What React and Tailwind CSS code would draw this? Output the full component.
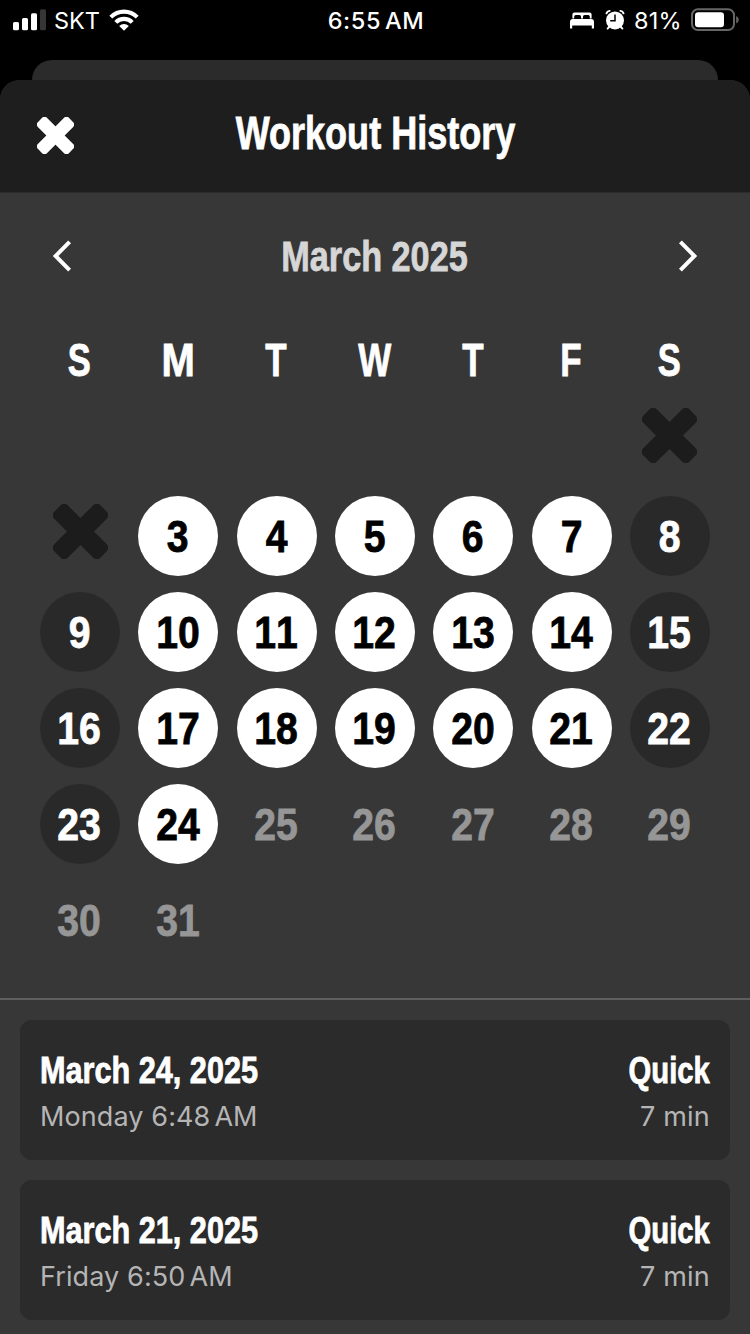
import React from "react";

const SANS = "font-['Inter','Liberation_Sans',sans-serif]";
const HEAD = "font-['Liberation_Sans',sans-serif] font-bold whitespace-nowrap [-webkit-text-stroke:0.8px_currentColor]";

function Cross({ className }) {
  return (
    <svg viewBox="-27.4 -27.4 54.8 54.8" className={className} fill="currentColor">
      <rect x="-32.5" y="-9.5" width="65" height="19" rx="5" transform="rotate(45)" />
      <rect x="-32.5" y="-9.5" width="65" height="19" rx="5" transform="rotate(-45)" />
    </svg>
  );
}

function Chevron({ className }) {
  return (
    <svg viewBox="0 0 20 32" className={className} fill="none" stroke="currentColor" strokeWidth="4">
      <path d="M17.6 1.8 L3.6 16 L17.6 30.2" />
    </svg>
  );
}

function StatusBar() {
  return (
    <div className={`${SANS} flex h-[60px] items-start text-white`}>
      <div className="flex h-10 flex-1 items-center pl-[13px]">
        <svg viewBox="0 0 33 22" className="h-[22px] w-[33px] shrink-0" fill="currentColor">
          <rect x="0" y="13" width="6" height="8.3" rx="1.5" />
          <rect x="9" y="9" width="6" height="12.3" rx="1.5" />
          <rect x="18" y="4.3" width="6" height="17" rx="1.5" />
          <rect x="27" y="0.3" width="6" height="21" rx="1.5" fill="#363636" />
        </svg>
        <span className="ml-[8px] w-[46px] pt-[2px] text-[23.5px] leading-[40px]">SKT</span>
        <svg viewBox="0 0 30 22" className="ml-[9px] h-[22px] w-[30px] shrink-0">
          <g fill="none" stroke="white" strokeWidth="4.1">
            <path d="M1.8 8.1 A18.6 18.6 0 0 1 28.2 8.1" />
            <path d="M6.8 13.4 A11.4 11.4 0 0 1 23.2 13.4" />
          </g>
          <path d="M15 21.8 L10.2 17 A7 7 0 0 1 19.8 17 Z" fill="white" />
        </svg>
      </div>
      <div className="h-10 w-[98px] whitespace-nowrap pt-px text-center text-[23.5px] font-medium leading-[40px] tracking-[0.6px]">
        6:55<span className="ml-[4px]">AM</span>
      </div>
      <div className="flex h-10 flex-1 items-center justify-end pr-[11px]">
        <svg viewBox="0 0 24 17" className="h-[17px] w-[24px] shrink-0" fill="currentColor">
          <path d="M2.4 6.4 V2.5 Q2.4 0.4 4.5 0.4 H19.5 Q21.6 0.4 21.6 2.5 V6.4 H19.8 V4.6 Q19.8 3 18.2 3 H14.6 Q13 3 13 4.6 V6.4 H11 V4.6 Q11 3 9.4 3 H5.8 Q4.2 3 4.2 4.6 V6.4 Z" />
          <path d="M0 16.4 V10 Q0 7 2.7 7 H21.3 Q24 7 24 10 V16.4 H21.8 V13.6 H2.2 V16.4 Z" />
        </svg>
        <svg viewBox="0 0 20 20" className="ml-[11px] h-[20px] w-[20px] shrink-0">
          <circle cx="10" cy="10.4" r="9" fill="white" />
          <g stroke="white" strokeWidth="1.9" strokeLinecap="round" fill="none">
            <path d="M1.5 3.4 Q2.2 1.2 4.6 0.9" />
            <path d="M18.5 3.4 Q17.8 1.2 15.4 0.9" />
            <path d="M4.5 16.5 L2.6 18.6" />
            <path d="M15.5 16.5 L17.4 18.6" />
          </g>
          <path d="M10 4.6 V10.8 H5.2" fill="none" stroke="black" strokeWidth="1.5" />
        </svg>
        <span className="ml-[9px] w-[47px] whitespace-nowrap pt-[2px] text-[23.5px] leading-[40px] tracking-[0.2px]">81%</span>
        <svg viewBox="0 0 49 24" className="ml-[9px] h-[24px] w-[49px] shrink-0">
          <rect x="2" y="1.3" width="42" height="20.8" rx="6" fill="none" stroke="#666" strokeWidth="2" />
          <rect x="5" y="4.2" width="29" height="15" rx="3.2" fill="white" />
          <path d="M46.2 8 Q48.8 9 48.8 11.7 Q48.8 14.4 46.2 15.4 Z" fill="#666" />
        </svg>
      </div>
    </div>
  );
}

const WEEKDAYS = [
  ["S", "scale-x-[0.75]"],
  ["M", "scale-x-[0.87]"],
  ["T", "scale-x-[0.76]"],
  ["W", "scale-x-[0.76]"],
  ["T", "scale-x-[0.76]"],
  ["F", "scale-x-[0.76]"],
  ["S", "scale-x-[0.75]"],
];

const REST = "bg-[#292929] text-white";
const DONE = "bg-white text-black";
const FUTURE = "text-[#969696]";

function Day({ index }) {
  const day = index - 5;
  if (day < 1 || day > 31) return <div className="size-20" />;
  if (day < 3) {
    return (
      <div className="flex size-20 items-center justify-center pb-[10px] text-[#1c1c1c]">
        <Cross className="size-[55px]" />
      </div>
    );
  }
  const weekend = index % 7 === 0 || index % 7 === 6;
  const look = day > 24 ? FUTURE : weekend ? REST : DONE;
  return (
    <div className={`${look} flex size-20 items-center justify-center rounded-full pt-[2px] pr-px`}>
      <span className={`${HEAD} scale-x-[0.87] text-[45px] leading-[80px] [font-kerning:none]`}>{day}</span>
    </div>
  );
}

function Workout({ date, time }) {
  return (
    <div className="flex h-[140px] items-start justify-between rounded-[12px] bg-[#2b2b2b] px-5 pt-[30px]">
      <div>
        <div className={`${HEAD} w-[220px] origin-left scale-x-[0.828] text-[37px] leading-[42px] text-white`}>{date}</div>
        <div className={`${SANS} mt-[5px] whitespace-nowrap text-[27px] leading-[40px] tracking-[0.1px] text-[#b5b5b5]`}>
          {time}<span className="ml-[4px]">AM</span>
        </div>
      </div>
      <div className="flex flex-col items-end">
        <div className={`${HEAD} origin-right scale-x-[0.79] text-[37px] leading-[42px] text-white`}>Quick</div>
        <div className={`${SANS} mt-[5px] text-[27px] leading-[40px] tracking-[0.2px] text-[#b5b5b5]`}>7 min</div>
      </div>
    </div>
  );
}

export default function App() {
  return (
    <div className="flex h-[1334px] w-[750px] flex-col overflow-hidden bg-black">
      <StatusBar />
      <div className="mx-8 h-5 shrink-0 rounded-t-[20px] bg-[#2b2b2b]" />
      <div className="flex flex-1 flex-col overflow-hidden rounded-t-[20px] bg-[#373737]">
        <header className="flex h-[113px] shrink-0 items-center border-b border-[#2c2c2c] bg-[#1e1e1e] px-[37px] pb-[2px]">
          <Cross className="size-[37px] shrink-0 text-white" />
          <h1 className="flex flex-1 justify-center pb-[5px] text-white">
            <span className={`${HEAD} scale-x-[0.783] text-[46px] leading-[60px]`}>Workout History</span>
          </h1>
          <div className="w-[37px]" />
        </header>

        <div className="flex h-[126px] shrink-0 items-center justify-between px-[52px] text-white">
          <Chevron className="h-8 w-5" />
          <span className={`${HEAD} scale-x-[0.815] pt-px pr-px text-[42px] leading-[60px] text-[#d6d6d6]`}>March 2025</span>
          <Chevron className="h-8 w-5 rotate-180" />
        </div>

        <div className="flex h-[81px] shrink-0 justify-between px-10 text-white">
          {WEEKDAYS.map(([letter, scale], i) => (
            <div key={i} className="flex w-20 justify-center pr-px">
              <span className={`${HEAD} ${scale} text-[46px] leading-[83px]`}>{letter}</span>
            </div>
          ))}
        </div>

        <div className="flex h-[598px] shrink-0 flex-col gap-4 px-10">
          {[0, 1, 2, 3, 4, 5].map((week) => (
            <div key={week} className="flex justify-between">
              {[0, 1, 2, 3, 4, 5, 6].map((d) => (
                <Day key={d} index={week * 7 + d} />
              ))}
            </div>
          ))}
        </div>

        <div className="flex shrink-0 flex-col gap-5 border-t-2 border-[#5f5f5f] px-5 pt-5">
          <Workout date="March 24, 2025" time="Monday 6:48" />
          <Workout date="March 21, 2025" time="Friday 6:50" />
        </div>
      </div>
    </div>
  );
}
